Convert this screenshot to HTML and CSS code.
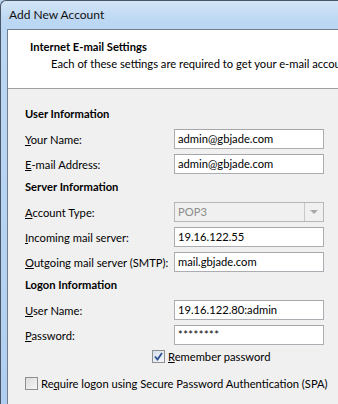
FILE: index.html
```html
<!DOCTYPE html>
<html>
<head>
  <title>Add New Account</title>
  <link rel="stylesheet" href="styles.css">
</head>
<body>
  <div class="window">
    <div class="titlebar">Add New Account</div>
    <div class="client">
      <div class="header">
        <h1>Internet E-mail Settings</h1>
        <p>Each of these settings are required to get your e-mail account working.</p>
      </div>

      <div class="form">
        <h2>User Information</h2>
        <div class="row">
          <label><u>Y</u>our Name:</label>
          <div class="field">admin@gbjade.com</div>
        </div>
        <div class="row">
          <label><u>E</u>-mail Address:</label>
          <div class="field">admin@gbjade.com</div>
        </div>

        <h2>Server Information</h2>
        <div class="row">
          <label><u>A</u>ccount Type:</label>
          <div class="field combo">
            <span>POP3</span>
            <span class="combo-btn"><span class="arrow"></span></span>
          </div>
        </div>
        <div class="row">
          <label><u>I</u>ncoming mail server:</label>
          <div class="field">19.16.122.55</div>
        </div>
        <div class="row">
          <label><u>O</u>utgoing mail server (SMTP):</label>
          <div class="field">mail.gbjade.com</div>
        </div>

        <h2>Logon Information</h2>
        <div class="row">
          <label><u>U</u>ser Name:</label>
          <div class="field">19.16.122.80:admin</div>
        </div>
        <div class="row">
          <label><u>P</u>assword:</label>
          <div class="field password">********</div>
        </div>

        <div class="check remember">
          <span class="box checked">
            <svg width="9" height="9" viewBox="0 0 9 9"><path d="M1 4.5 L3.5 7.5 L8 1" fill="none" stroke="#2a4f8f" stroke-width="1.8"/></svg>
          </span>
          <span><u>R</u>emember password</span>
        </div>
        <div class="check spa">
          <span class="box"></span>
          <span>Re<u>q</u>uire logon using Secure Password Authentication (SPA)</span>
        </div>
      </div>
    </div>
  </div>
</body>
</html>
```

FILE: styles.css
```css
html, body {
  margin: 0;
  padding: 0;
  overflow: hidden;
  background: #b8d4f0;
}

body {
  font-family: Lato, "Liberation Sans", sans-serif;
  font-size: 11.2px;
  color: #000;
}

.window {
  width: 520px;
  height: 404px;
  overflow: hidden;
  background: linear-gradient(to bottom, #d3e5f6 0px, #bcd7f3 20px, #b0cff0 404px);
  border-left: 1px solid #4a5566;
  border-top: 1px solid #4a5566;
  border-top-left-radius: 6px;
  box-sizing: border-box;
}

.titlebar {
  height: 28px;
  padding-left: 8px;
  line-height: 20px;
  padding-top: 4px;
  box-sizing: border-box;
  font-size: 12px;
  color: #111;
}

.client {
  margin-left: 6px;
  border-left: 1px solid #6f7d8e;
  border-top: 1px solid #6f7d8e;
  background: #f0f0f0;
  height: 375px;
}

.header {
  background: #fff;
  height: 58px;
  border-bottom: 1px solid #a0a0a0;
  white-space: nowrap;
  overflow: hidden;
}

.header h1 {
  font-size: 11.2px;
  font-weight: bold;
  margin: 0;
  padding: 9px 0 0 22px;
  line-height: 16px;
}

.header p {
  margin: 0;
  padding: 1px 0 0 43px;
  line-height: 16px;
}

.form {
  padding: 17px 0 0 17px;
}

h2 {
  font-size: 11.2px;
  font-weight: bold;
  margin: 0 0 7px 0;
  line-height: 16px;
}

.row + h2 {
  margin-top: 5px;
}

.row {
  display: flex;
  align-items: center;
  margin-bottom: 5px;
}

.row label {
  width: 149px;
  flex-shrink: 0;
  white-space: nowrap;
}

.field {
  width: 150px;
  height: 20px;
  flex-shrink: 0;
  box-sizing: border-box;
  background: #fff;
  border: 1px solid #abadb3;
  border-top-color: #a5a7ad;
  padding: 0 3px;
  line-height: 18px;
  white-space: nowrap;
  overflow: hidden;
}

.combo {
  display: flex;
  justify-content: space-between;
  background: #f0f0f0;
  color: #8d8d8d;
  border-color: #b6b6b6;
  padding-right: 0;
}

.combo-btn {
  width: 18px;
  height: 18px;
  border-left: 1px solid #c8c8c8;
  display: flex;
  align-items: center;
  justify-content: center;
}

.arrow {
  width: 0;
  height: 0;
  border-left: 4px solid transparent;
  border-right: 4px solid transparent;
  border-top: 4px solid #a8a8a8;
}

.password {
  font-size: 11px;
  letter-spacing: 0.5px;
}

.check {
  display: flex;
  align-items: center;
  gap: 3px;
  white-space: nowrap;
}

.remember {
  padding-left: 127px;
  margin-top: 2px;
}

.spa {
  margin-top: 14px;
}

.box {
  width: 11px;
  height: 11px;
  flex-shrink: 0;
  border: 1px solid #8e8f8f;
  background: linear-gradient(to bottom right, #dcdcdc, #f6f6f6);
  display: flex;
  align-items: center;
  justify-content: center;
}

.box.checked {
  background: linear-gradient(to bottom right, #d6dfec, #f4f6fa);
}
```
